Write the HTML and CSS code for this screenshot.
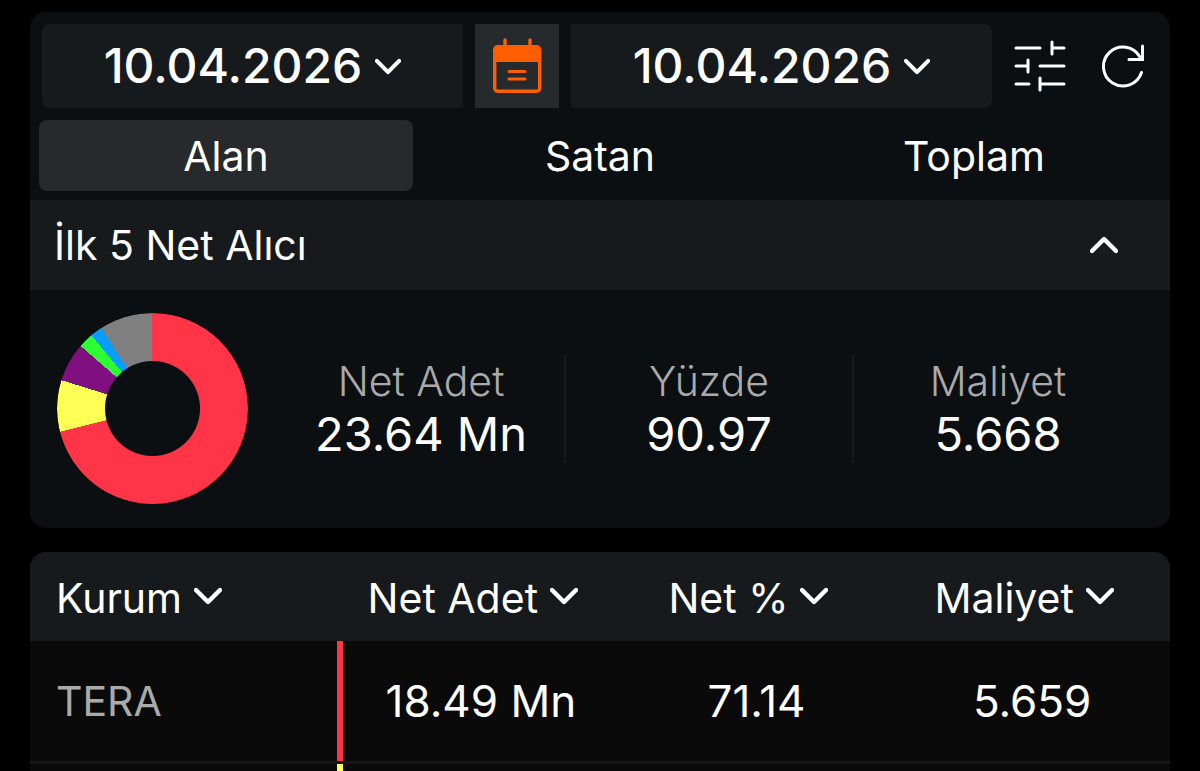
FILE: index.html
```
<!DOCTYPE html>
<html lang="tr">
<head>
  <meta charset="UTF-8">
  <meta name="viewport" content="width=device-width, initial-scale=1">
  <title>İlk 5 Net Alıcı</title>
  <link rel="stylesheet" href="styles.css">
</head>
<body>
  <svg class="symbols" aria-hidden="true">
    <symbol id="chevron" viewBox="0 0 28 18">
      <path d="M2 3l12 12L26 3" fill="none" stroke="currentColor" stroke-width="4.4" stroke-linecap="round" stroke-linejoin="round"/>
    </symbol>
  </svg>

  <main class="page">
    <section class="card">
      <div class="toolbar">
        <button type="button" class="date date-start">10.04.2026 <svg class="chevron"><use href="#chevron"/></svg></button>
        <button type="button" class="calendar" aria-label="Takvim">
          <svg width="50" height="56" viewBox="0 0 50 56" fill="none" stroke="currentColor" stroke-linecap="round">
            <path d="M13 2v8M38 2v8" stroke-width="3.4"/>
            <rect x="2.7" y="8.7" width="45" height="44.6" rx="3" stroke-width="3.4"/>
            <path d="M3 9h44v15H3z" fill="currentColor" stroke="none"/>
            <path d="M17 33.5h16M17 41h16" stroke-width="3"/>
          </svg>
        </button>
        <button type="button" class="date date-end">10.04.2026 <svg class="chevron"><use href="#chevron"/></svg></button>
        <button type="button" class="tool" aria-label="Filtre">
          <svg width="52" height="52" viewBox="0 0 52 52" fill="none" stroke="currentColor" stroke-width="3" stroke-linecap="round">
            <path d="M2 8h24M38 2v12M38 8h12"/>
            <path d="M2 26h12M14 20v12M26 26h24"/>
            <path d="M2 44h13M26 38v12M26 44h24"/>
          </svg>
        </button>
        <button type="button" class="tool" aria-label="Yenile">
          <svg width="44" height="44" viewBox="0 0 44 44" fill="none" stroke="currentColor" stroke-width="3" stroke-linecap="round">
            <path d="M40.500 28.500A19.500 19.500 0 1 1 39 13"/>
            <path d="M41.500 2v13.500H28"/>
          </svg>
        </button>
      </div>

      <div class="tabs" role="tablist">
        <button type="button" role="tab" class="tab active" aria-selected="true">Alan</button>
        <button type="button" role="tab" class="tab" aria-selected="false">Satan</button>
        <button type="button" role="tab" class="tab" aria-selected="false">Toplam</button>
      </div>

      <button type="button" class="section-head" aria-expanded="true">
        <span>İlk 5 Net Alıcı</span>
        <svg class="chevron up"><use href="#chevron"/></svg>
      </button>

      <div class="summary">
        <div class="donut"></div>
        <dl class="stats">
          <div class="stat"><dt>Net Adet</dt><dd>23.64 Mn</dd></div>
          <div class="stat"><dt>Yüzde</dt><dd>90.97</dd></div>
          <div class="stat"><dt>Maliyet</dt><dd>5.668</dd></div>
        </dl>
      </div>
    </section>

    <section class="card">
      <table class="brokers">
        <thead>
          <tr>
            <th class="name"><button type="button">Kurum <svg class="chevron"><use href="#chevron"/></svg></button></th>
            <th><button type="button">Net Adet <svg class="chevron"><use href="#chevron"/></svg></button></th>
            <th><button type="button">Net % <svg class="chevron"><use href="#chevron"/></svg></button></th>
            <th><button type="button">Maliyet <svg class="chevron"><use href="#chevron"/></svg></button></th>
          </tr>
        </thead>
        <tbody>
          <tr>
            <td class="name red">TERA</td>
            <td>18.49 Mn</td>
            <td>71.14</td>
            <td>5.659</td>
          </tr>
          <tr>
            <td class="name yellow"></td>
            <td></td>
            <td></td>
            <td></td>
          </tr>
        </tbody>
      </table>
    </section>
  </main>
</body>
</html>
```
FILE: styles.css
```
* { box-sizing: border-box; }
body {
  margin: 0;
  height: 100vh;
  overflow: hidden;
  background: #000;
  color: #fff;
  font-family: Inter, sans-serif;
  font-size: 41px;
  line-height: 48px;
}
button {
  margin: 0;
  padding: 0;
  border: none;
  background: none;
  color: inherit;
  font: inherit;
  cursor: pointer;
}
svg { flex: none; }
.symbols {
  position: absolute;
  width: 0;
  height: 0;
}
.chevron {
  width: 28px;
  height: 18px;
}
.up { transform: rotate(180deg); }

.page {
  display: flex;
  flex-direction: column;
  gap: 24px;
  padding: 12px 30px;
}
.card {
  background: #0b0f12;
  border-radius: 16px;
  overflow: hidden;
}

/* date range */
.toolbar {
  display: flex;
  align-items: center;
  gap: 12px;
  padding: 12px 25px 12px 12px;
}
.date {
  display: flex;
  flex: 1;
  align-items: center;
  justify-content: center;
  gap: 13px;
  height: 84px;
  background: #161a1d;
  font-size: 48px;
  font-weight: 500;
}
.date .chevron {
  width: 26px;
  height: 17px;
}
.date-start { border-radius: 8px 0 0 8px; }
.date-end { border-radius: 0 8px 8px 0; }
.calendar {
  display: grid;
  place-items: center;
  width: 84px;
  height: 84px;
  background: #272a2d;
  color: #ff5e00;
}
.tool { display: flex; }
.tool:nth-of-type(4) { margin-left: 10px; }
.tool:last-child { margin-left: 23px; }

/* tabs */
.tabs {
  display: grid;
  grid-template-columns: repeat(3, 1fr);
  padding: 0 9px 9px;
}
.tab {
  height: 71px;
  border-radius: 8px;
}
.tab.active { background: #272a2d; }

.section-head {
  display: flex;
  align-items: center;
  justify-content: space-between;
  width: 100%;
  height: 90px;
  padding: 0 52px 0 24px;
  background: #161a1d;
}

/* summary */
.summary {
  display: flex;
  align-items: center;
  gap: 30px;
  padding: 23px 28px 24px 27px;
}
.donut {
  flex: none;
  width: 191px;
  height: 191px;
  border-radius: 50%;
  background: conic-gradient(
    #ff3547 0 71.1%,
    #ffff55 0 79.8%,
    #800f80 0 86.4%,
    #2dff35 0 88.9%,
    #0a9cff 0 91%,
    #808080 0
  );
  -webkit-mask: radial-gradient(circle, transparent 47px, #000 48px);
  mask: radial-gradient(circle, transparent 47px, #000 48px);
}
.stats {
  display: grid;
  flex: 1;
  grid-template-columns: repeat(3, 1fr);
  margin: 0;
  text-align: center;
}
.stat {
  height: 108px;
  border-right: 2px solid #161a1d;
}
.stat:last-child { border-right: none; }
.stat dt {
  padding-top: 2px;
  color: #aaa;
  font-weight: 300;
}
.stat dd {
  margin: 0;
  padding-top: 5px;
  font-size: 47px;
}

/* broker table */
.brokers {
  width: 100%;
  table-layout: fixed;
  border-collapse: separate;
  border-spacing: 0;
  text-align: center;
}
.brokers th {
  height: 89px;
  padding: 0 16px 0 0;
  background: #161a1d;
  font-weight: 400;
}
.brokers th button {
  display: inline-flex;
  align-items: center;
  gap: 12px;
  vertical-align: middle;
}
.brokers th .chevron { margin-bottom: 4px; }
.brokers .name {
  width: 313px;
  padding-left: 26px;
  text-align: left;
}
.brokers td {
  height: 123px;
  padding: 0;
  border-bottom: 3px solid #161616;
  background: #0a0a0a;
  font-size: 44px;
}
.brokers td.name {
  color: #aaa;
  font-size: 41px;
}
.brokers .red { box-shadow: inset -6px 0 #ff3547; }
.brokers .yellow { box-shadow: inset -6px 0 #ffff55; }
```
